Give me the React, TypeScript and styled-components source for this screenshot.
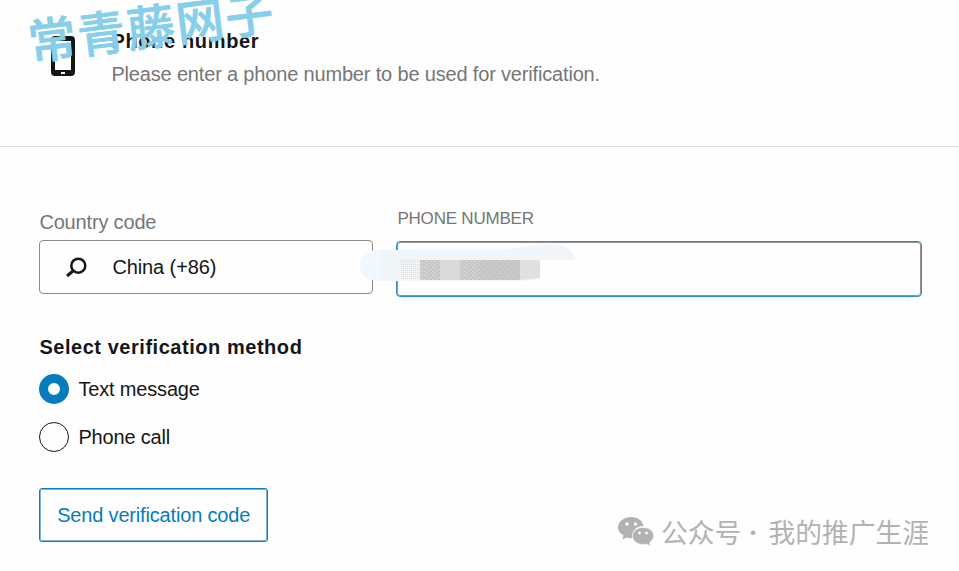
import React, { useState } from "react";
import styled, { createGlobalStyle } from "styled-components";

const GlobalStyle = createGlobalStyle`
  * { box-sizing: border-box; }
  body {
    margin: 0;
    background: #fefefe;
    color: #161618;
    font-family: "Liberation Sans", Arial, sans-serif;
    overflow: hidden;
  }
`;

const Page = styled.main`
  position: relative;
  width: 959px;
  height: 571px;
  overflow: hidden;
`;

const Header = styled.header`
  display: flex;
  height: 147px;
  padding: 29px 0 0 51px;
  border-bottom: 1px solid #dedede;
`;

const PhoneIcon = styled.svg`
  width: 24px;
  height: 40px;
  margin: 7px 36px 0 0;
  flex: none;
`;

const Text = styled.span<{ $spacing?: number }>`
  display: block;
  font-size: 20px;
  line-height: 24px;
  letter-spacing: ${(p) => p.$spacing ?? -0.17}px;
  text-indent: 0.4px;
  white-space: nowrap;
`;

const Title = styled(Text).attrs({ as: "h2" })`
  margin: 0;
  font-weight: 700;
`;

const Subtitle = styled(Text)`
  margin-top: 9px;
  color: #767676;
`;

const Form = styled.form`
  padding: 0 37px 0 39px;
`;

const Fields = styled.div`
  display: grid;
  grid-template-columns: 334px 526px;
  column-gap: 23px;
  padding-top: 59px;
`;

const Field = styled.div``;

const Label = styled(Text)`
  height: 34px;
  padding-top: 4px;
  color: #767676;
`;

const CapsLabel = styled(Label)`
  height: 35px;
  padding: 1px 0 0 1px;
  font-size: 17px;
`;

const CountrySelect = styled.div`
  display: flex;
  align-items: center;
  height: 54px;
  padding-left: 26px;
  border: 1px solid #8b8b8b;
  border-radius: 4px;
`;

const SearchIcon = styled.svg`
  width: 21px;
  height: 20px;
  margin-right: 25px;
`;

const PhoneInput = styled.div`
  height: 56px;
  border: 1px solid #2c93cb;
  border-radius: 4px;
  box-shadow: inset 0 0 0 1px #929292;
`;

const Methods = styled.section`
  padding-top: 38px;
`;

const RadioGroup = styled.div`
  display: grid;
  gap: 18px;
  padding-top: 15px;
`;

const Radio = styled.label`
  display: flex;
  align-items: center;
  gap: 9px;
  height: 30px;
`;

const Dot = styled.input`
  appearance: none;
  width: 30px;
  height: 30px;
  margin: 0;
  border: 1px solid #161618;
  border-radius: 50%;
  &:checked { border: 9px solid #057dbc; }
`;

const SendButton = styled.button`
  display: block;
  width: 229px;
  height: 54px;
  margin-top: 36px;
  padding: 0;
  border: 1px solid #0c7fbd;
  border-radius: 3px;
  box-shadow: inset 0 0 0 1px #7ab6da;
  background: transparent;
  color: #057dbc;
  font-family: inherit;
`;

const Redaction = styled.svg`
  position: absolute;
  left: 360px;
  top: 243px;
  width: 218px;
  height: 40px;
`;

const Stamp = styled.div`
  position: absolute;
  left: 27px;
  top: 0;
  transform: rotate(-7deg);
  color: #87ceeb;
  font: 500 48px/48px "Noto Sans CJK SC", sans-serif;
  letter-spacing: 1.6px;
  -webkit-text-stroke: 0.7px #87ceeb;
  white-space: nowrap;
`;

const Signature = styled.footer`
  position: absolute;
  left: 618px;
  top: 514px;
  display: flex;
  align-items: center;
  color: #b2b2b2;
  font: 400 26.8px/36px "Noto Sans CJK SC", sans-serif;
  white-space: nowrap;
`;

const Separator = styled.span`
  width: 27px;
  padding-right: 4px;
  text-align: center;
  font-family: "Noto Sans", sans-serif;
  font-weight: 700;
`;

const ChatIcon = styled.svg`
  width: 36px;
  height: 30px;
  margin-right: 7px;
`;

export default function App() {
  const [method, setMethod] = useState("text");
  return (
    <Page>
      <GlobalStyle />
      <Header>
        <PhoneIcon viewBox="0 0 24 40">
          <path fill="#161618" fillRule="evenodd" d="M4 0h16q4 0 4 4v32q0 4-4 4H4q-4 0-4-4V4q0-4 4-4zM4 5v29h16V5zM10 36v2h4v-2z" />
        </PhoneIcon>
        <div>
          <Title $spacing={0.65}>Phone number</Title>
          <Subtitle>Please enter a phone number to be used for verification.</Subtitle>
        </div>
      </Header>
      <Form>
        <Fields>
          <Field>
            <Label>Country code</Label>
            <CountrySelect>
              <SearchIcon viewBox="0 0 21 20" fill="none" stroke="#161618">
                <circle cx="12.3" cy="8.7" r="7" strokeWidth="2.5" />
                <path d="M7 14L1 19" strokeWidth="3" />
              </SearchIcon>
              <Text $spacing={-0.1}>China (+86)</Text>
            </CountrySelect>
          </Field>
          <Field>
            <CapsLabel $spacing={-0.2}>PHONE NUMBER</CapsLabel>
            <PhoneInput />
          </Field>
        </Fields>
        <Methods>
          <Title $spacing={0.54}>Select verification method</Title>
          <RadioGroup>
            <Radio>
              <Dot type="radio" name="method" checked={method === "text"} onChange={() => setMethod("text")} />
              <Text>Text message</Text>
            </Radio>
            <Radio>
              <Dot type="radio" name="method" checked={method === "call"} onChange={() => setMethod("call")} />
              <Text>Phone call</Text>
            </Radio>
          </RadioGroup>
        </Methods>
        <SendButton type="button"><Text>Send verification code</Text></SendButton>
      </Form>
      <Redaction viewBox="0 0 218 40">
        <defs>
          <pattern id="grain" width="4" height="4" patternUnits="userSpaceOnUse">
            <path d="M0 0h1v1H0zM2 2h1v1H2z" fill="#e4e4e4" />
          </pattern>
          <pattern id="speck" width="6" height="6" patternUnits="userSpaceOnUse">
            <path d="M1 2h1v1H1zM4 5h1v1H4z" fill="#b4b4b4" />
          </pattern>
          <pattern id="pale" width="4" height="4" patternUnits="userSpaceOnUse">
            <path d="M0 0h1v1H0zM2 2h1v1H2zM2 0h1v1H2zM0 2h1v1H0z" fill="#fefefe" />
          </pattern>
          <pattern id="dots" width="8" height="8" patternUnits="userSpaceOnUse">
            <path d="M2 1h1v1H2z" fill="#dde2e5" />
          </pattern>
        </defs>
        <path fill="#eff5f9" d="M17 7H135C154 7 168 1 191 1Q211 1 216 17H180V36Q170 38 150 38H16Q0 35 0 22T17 7z" />
        <path fill="url(#pale)" d="M17 7H20V38H16Q0 35 0 22T17 7z" />
        <path fill="url(#dots)" d="M20 10H210V17H40V36H20z" />
        <path fill="#e7e9ea" d="M40 17H60V37H40z" />
        <path fill="url(#pale)" d="M40 17H60V37H40z" />
        <path fill="#c8c8c8" d="M60 17H160V37H60z" />
        <path fill="url(#grain)" d="M60 17H120V37H60z" />
        <path fill="#d8d8d8" d="M80 17H100V37H80z" />
        <path fill="url(#grain)" d="M80 17H100V37H80z" />
        <path fill="url(#speck)" d="M120 17H160V37H120z" />
        <path fill="#e0e0e0" d="M160 17H180V35L160 37z" />
        <path fill="url(#dots)" d="M160 17H180V35L160 37z" />
      </Redaction>
      <Stamp>常青藤网子</Stamp>
      <Signature>
        <ChatIcon viewBox="0 0 36 30" fill="#b2b2b2">
          <path d="M13 0C20 0 25 4 25.500 9C18 9 13 14 14.500 21Q11.500 21.500 8.500 20.500L4.500 22.500L5.500 18.500C2 16.500 0 13.500 0 10.500C0 4.500 6 0 13 0z" />
          <path d="M25 10.500C31 10.500 35.700 14 35.700 18.800Q35.700 22.500 31.500 25.500L32.500 29L28.500 27Q26.500 27.500 25 27.500C19 27.500 14.500 23.500 14.500 19C14.500 14.300 19 10.500 25 10.500z" stroke="#fefefe" strokeWidth="0.5" />
          <g fill="#fefefe"><circle cx="9" cy="7" r="1.700" /><circle cx="17.500" cy="7" r="1.700" /><circle cx="21.500" cy="16" r="1.400" /><circle cx="28.500" cy="16" r="1.400" /></g>
        </ChatIcon>
        <span>公众号</span>
        <Separator>·</Separator>
        <span>我的推广生涯</span>
      </Signature>
    </Page>
  );
}
